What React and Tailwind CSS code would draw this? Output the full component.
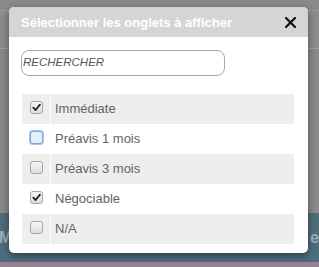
import React from "react";

function Check({ checked, focus }) {
  return (
    <div
      className={
        "w-[13px] h-[13px] rounded-[3px] border flex items-center justify-center " +
        (focus
          ? "border-[#7ea6e0] bg-[#e8eef8] shadow-[0_0_0_1px_#a9c4ee]"
          : "border-[#a5a5a5] bg-[linear-gradient(#f6f6f6,#dedede)]")
      }
    >
      {checked && (
        <svg width="9" height="9" viewBox="0 0 10 10">
          <path d="M1.5 5.2 L4 7.8 L8.8 1.8" fill="none" stroke="#222" strokeWidth="2" strokeLinecap="round" strokeLinejoin="round" />
        </svg>
      )}
    </div>
  );
}

const rows = [
  { label: "Immédiate", checked: true },
  { label: "Préavis 1 mois", checked: false, focus: true },
  { label: "Préavis 3 mois", checked: false },
  { label: "Négociable", checked: true },
  { label: "N/A", checked: false },
];

export default function App() {
  return (
    <div className="relative w-[319px] h-[267px] overflow-hidden bg-[#8a8a8a] font-['Liberation_Sans',Arial,sans-serif]">
      <div className="h-[11px] bg-[#8a8a8a] border-b border-[#9c9c9c]" />
      <div className="h-[38px] bg-[#8d8d8d] border-b border-[#a0a0a0]" />
      <div className="h-[164px] bg-[#8b8b8b]" />
      <div className="h-[49px] bg-[#4f6e7b] flex items-center text-[16px] text-[#9fb1b9] font-bold pl-0">
        <span className="-ml-[1px]">Mo</span>
        <span className="ml-auto mr-0 text-[16px]">e</span>
      </div>
      <div className="h-[4px] bg-[#a07a9a]" />

      <div className="absolute left-[9px] top-[7px] w-[299px] h-[246px] bg-white rounded-[5px] shadow-[0_3px_8px_rgba(0,0,0,0.45)] overflow-hidden">
        <div className="h-[30px] bg-[#d5d5d5] flex items-center pl-[12px] pr-[12px]">
          <span className="text-white font-bold text-[13px] leading-none">
            Sélectionner les onglets à afficher
          </span>
          <svg className="ml-auto" width="11" height="11" viewBox="0 0 11 11">
            <path d="M1 1 L10 10 M10 1 L1 10" stroke="#111" strokeWidth="2.2" strokeLinecap="square" />
          </svg>
        </div>
        <div className="pl-[12px] pt-[13px]">
          <div className="w-[204px] h-[26px] rounded-[8px] border border-[#a8a8a8] flex items-center pl-[1px] italic text-[11.5px] text-[#555]">
            RECHERCHER
          </div>
        </div>
        <div className="mt-[18px] ml-[13px] w-[272px] flex flex-col">
          {rows.map((r, i) => (
            <div
              key={r.label}
              className={"flex h-[30px] " + (i % 2 === 0 ? "bg-[#eeeeee]" : "bg-white")}
            >
              <div className="w-[29px] flex items-center justify-center pb-[3px] border-r border-white">
                <Check checked={r.checked} focus={r.focus} />
              </div>
              <div className="flex items-center pl-[4px] text-[13px] text-[#636363]">{r.label}</div>
            </div>
          ))}
        </div>
      </div>
    </div>
  );
}
